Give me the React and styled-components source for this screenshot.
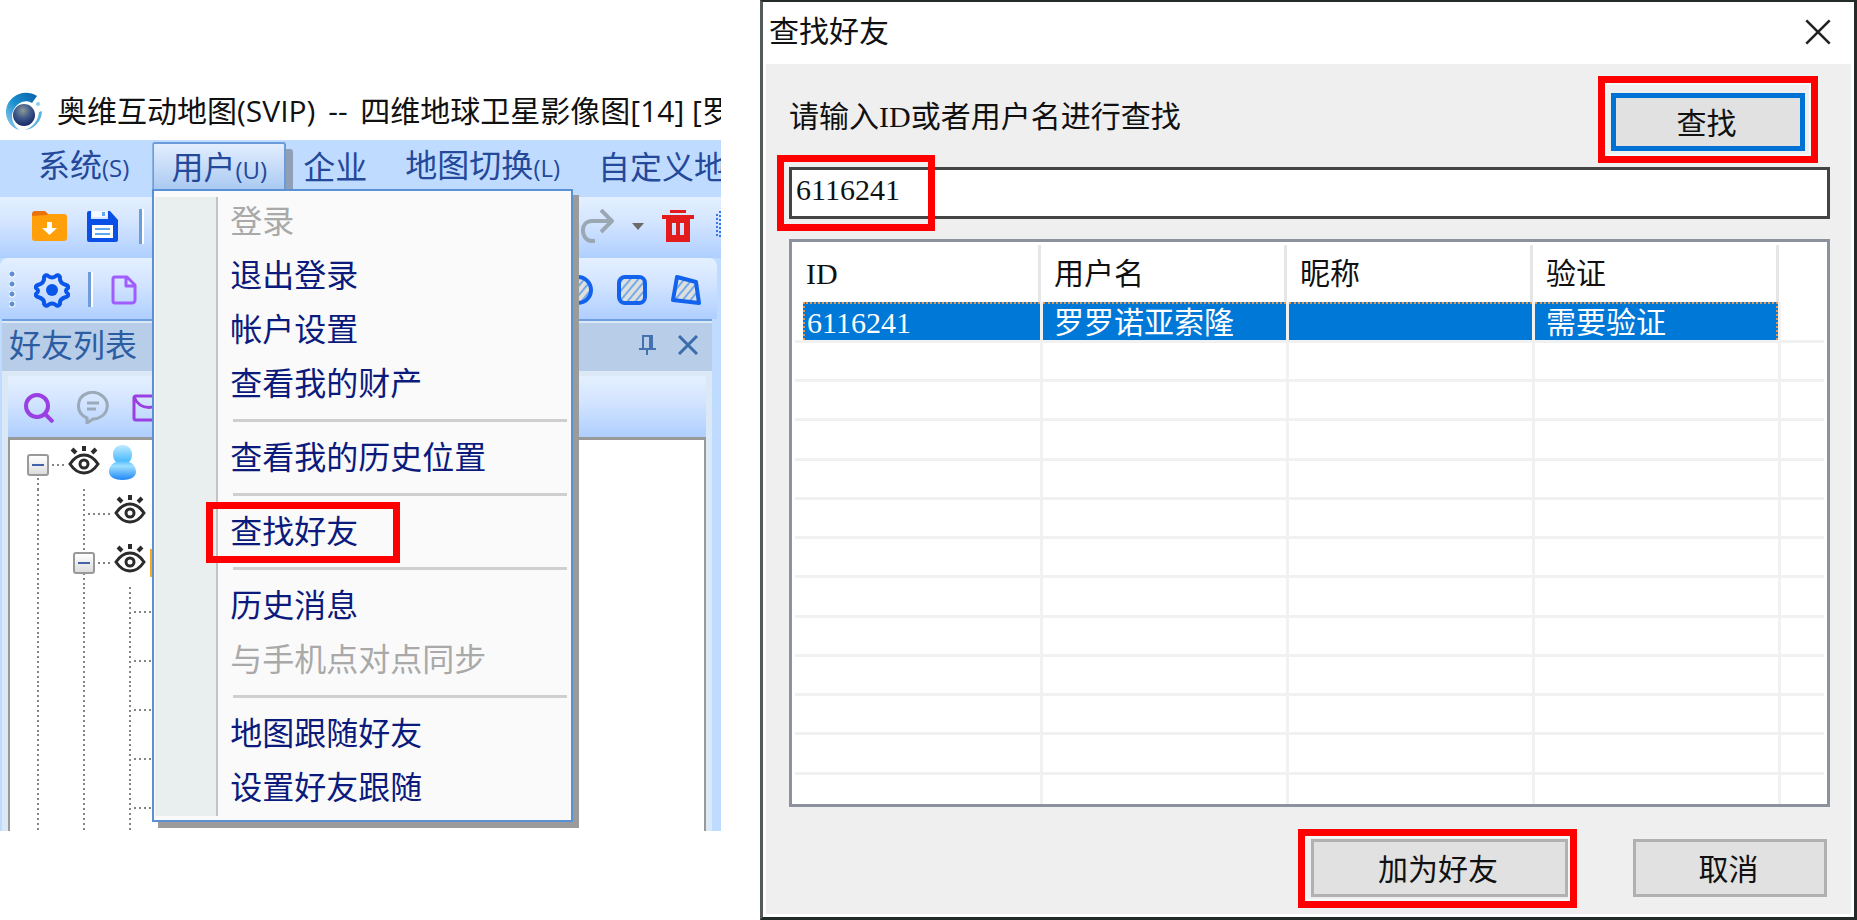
import React from 'react';
import styled, {createGlobalStyle, css} from 'styled-components';

const GlobalStyle = createGlobalStyle`
* { box-sizing: border-box; }
body {
    margin: 0;
    background: #fff;
    font-family: "Open Sans", "Noto Sans CJK SC", sans-serif;
}
button {
    margin: 0;
    padding: 0;
    border: 0;
    background: none;
    font: inherit;
    color: inherit;
    white-space: nowrap;
}
svg { display: block; flex: none; }
`

const Page = styled.main`
display: grid;
grid-template-columns: 721fr 1097fr;
column-gap: 39px;
align-items: start;
`

/* red frame drawn over a control */
const Mark = styled.span`
position: absolute;
border: 7px solid #fe0000;
box-shadow: ${props => props.$halo ? "0 0 0 1px #e9f6f6, inset 0 0 0 2px #f4fafa" : "none"};
pointer-events: none;
inset: ${props => props.$inset};
width: ${props => props.$width || "auto"};
`

const Marked = styled.div`
position: relative;
display: flex;
`

/* ---------- map window ---------- */

const MapWindow = styled.section`
margin-top: 80px;
overflow: hidden;
background: #bfdbff;
`

const TitleBar = styled.header`
display: flex;
align-items: center;
gap: 14px;
height: 60px;
padding: 2px 0 0 5px;
background: #fff;
`

const WindowTitle = styled.h1`
margin: 0;
font-size: 30px;
line-height: 40px;
font-weight: 400;
white-space: nowrap;
color: #111;
span { margin: 0 5px; }
`

const MenuBar = styled.nav`
display: flex;
height: 57px;
padding: 2px 0 6px 19px;
color: #24489a;
font-size: 32px;
line-height: 46px;
white-space: nowrap;
small { font-size: 24px; }
`

const MenuTitle = styled.button`
height: 49px;
padding: 0 19px;
`

const OpenMenu = styled.div`
position: relative;
flex: none;
width: 134px;
margin: 0 -2px 0 4px;
${MenuTitle} {
    width: 100%;
    padding: 0;
    border: 2px solid #6b9bd8;
    border-bottom: 0;
    border-radius: 3px 3px 0 0;
    background: linear-gradient(#e2eefe, #a8c8f1);
    box-shadow: 7px 7px 0 #8f9fb5;
    clip-path: inset(0 -8px 0 0);
}
`

const Menu = styled.div`
position: absolute;
z-index: 2;
top: 47px;
left: 0;
width: 421px;
padding: 3px 4px 6px 76px;
border: 2px solid #5a90d4;
background:
    linear-gradient(#c3c3c3, #c3c3c3) 62px 6px / 2px calc(100% - 10px) no-repeat,
    linear-gradient(#e8efee, #e8efee) 1px 6px / 61px calc(100% - 10px) no-repeat,
    #fafafa;
box-shadow: 6px 6px 0 #9b9b9b;
`

const MenuItem = styled.button`
display: block;
height: 54px;
line-height: 54px;
font-size: 32px;
color: ${props => props.disabled ? "#a9a9a9" : "#0c1a7c"};
`

const Separator = styled.hr`
height: 3px;
margin: 9px 0 8px 3px;
border: 0;
background: #cfcfcf;
`

const Toolbar = styled.div`
display: flex;
justify-content: space-between;
align-items: center;
height: 61px;
margin: ${props => props.$margin || "0"};
padding: ${props => props.$padding};
border-radius: ${props => props.$radius || "0"};
background: linear-gradient(#e4f0ff, #d4e5ff 40%, #afcfff);
`

const Group = styled.div`
display: flex;
align-items: center;
gap: ${props => props.$gap};
`

const Divider = styled.span`
width: 5px;
height: 35px;
border-left: 3px solid #6f9ddb;
border-right: 2px solid #fff;
`

const Grip = styled.span`
width: 7px;
height: 37px;
background: radial-gradient(circle at 3px 3px, #5b8fd0 2px, #fff 3px, transparent 4px) 0 0 / 7px 10px;
`

const FriendPanel = styled.section`
margin: 0 9px 0 2px;
border-top: 2px solid #6f9fe0;
padding: 2px 0 0;
background: #dbe8f6;
`

const PanelCaption = styled.header`
display: flex;
justify-content: space-between;
align-items: center;
height: 48px;
padding: 0 14px 4px 7px;
background: #b8cde8;
color: #2c5da3;
h2 {
    margin: 0;
    font-size: 32px;
    line-height: 40px;
    font-weight: 400;
}
`

const Tree = styled.ul`
height: 394px;
margin: 0 6px;
padding: 0 0 0 5px;
overflow: hidden;
border: solid #999;
border-width: 3px 2px 0;
background: #fff;
list-style: none;
`

const TreeRow = styled.li`
display: flex;
align-items: center;
height: 49px;
`

const vertical = 'repeating-linear-gradient(#858585 0 2px, transparent 2px 5px)'
const horizontal = 'repeating-linear-gradient(90deg, #858585 0 2px, transparent 2px 5px)'
const guides = {
    line: `${vertical} 22px 0 / 2px 100% no-repeat`,
    branch: `${vertical} 22px 0 / 2px 100% no-repeat, ${horizontal} 27px 24px / 22px 2px no-repeat`,
    root: `${vertical} 22px 38px / 2px 100% no-repeat, ${horizontal} 37px 24px / 22px 2px no-repeat`,
    stub: `${horizontal} 1px 24px / 2px 2px no-repeat`,
}

const Guide = styled.span`
display: flex;
flex: none;
justify-content: center;
align-items: center;
width: 46px;
height: 49px;
background: ${props => guides[props.$kind] || "none"};
`

const Toggle = styled.button`
width: 22px;
height: 22px;
border: 2px solid #999;
border-radius: 3px;
background: linear-gradient(#4462a8, #4462a8) center / 12px 2px no-repeat, linear-gradient(#fff, #ddd);
`

/* ---------- find friend dialog ---------- */

const Dialog = styled.section`
border: solid #232b28;
border-width: 2px 3px 3px;
border-left-color: #555c58;
padding: 0 3px 3px;
background: #fff;
color: #111;
font-family: "Liberation Serif", "Noto Sans CJK SC", serif;
font-size: 30px;
line-height: 38px;
`

const DialogTitle = styled.header`
display: flex;
justify-content: space-between;
align-items: center;
height: 62px;
padding: 0 20px 2px 3px;
h2 {
    margin: 0;
    font-size: 30px;
    font-weight: 400;
}
`

const DialogBody = styled.form`
padding: 0 21px 17px 23px;
background: #efefef;
`

const PromptRow = styled.div`
display: flex;
justify-content: space-between;
align-items: flex-start;
height: 103px;
padding: 29px 25px 0 0;
label { margin-top: 5px; }
`

const PushButton = styled.button`
width: ${props => props.$width || "194px"};
height: 58px;
padding: 3px 3px 0 0;
background: #e1e1e1;
${props => props.$primary ? css`border: 5px solid #0072d6;` : css`border: 3px solid #b1b1b1;`}
`

const SearchInput = styled.input`
width: 100%;
height: 52px;
padding: 0 4px 6px;
border: 3px solid #444;
border-radius: 0;
background: #fff;
color: #111;
font: inherit;
outline: 0;
`

const ListView = styled.div`
height: 568px;
margin-top: 20px;
padding: 3px;
overflow: hidden;
border: 3px solid #8c929d;
background: #fff;
`

const ResultTable = styled.table`
width: 100%;
table-layout: fixed;
border-collapse: separate;
border-spacing: 0;
text-align: left;
th, td {
    padding: 0;
    font-weight: 400;
    white-space: nowrap;
}
td {
    border-right: 3px solid #f1f1f1;
    border-bottom: 3px solid #f1f1f1;
}
td:last-child { border-right: 0; }
tbody tr { height: 39px; }
tbody tr:nth-child(4n) { height: 40px; }
tbody tr:last-child td { border-bottom: 0; }
`

const HeadCell = styled.div`
height: 57px;
margin-right: 2px;
padding-left: 11px;
line-height: 58px;
border-right: ${props => props.$last ? "0" : "3px solid #e6e6e6"};
`

const SelectedCell = styled.div`
height: 38px;
padding-left: ${props => props.$first ? "2px" : "11px"};
margin-left: ${props => props.$first ? "8px" : "0"};
line-height: 38px;
border: 0 dotted #e39a55;
border-top-width: 2px;
border-left-width: ${props => props.$first ? "2px" : "0"};
border-right-width: ${props => props.$end ? "2px" : "0"};
background: #0078d7;
color: #fff;
`

const Footer = styled.footer`
display: flex;
justify-content: flex-end;
gap: 65px;
margin-top: 32px;
padding-right: 3px;
`

/* ---------- icons ---------- */

const LogoIcon = () => (
    <svg width="38" height="40" viewBox="0 0 38 40">
        <defs>
            <linearGradient id="swirl" x1="1" y1="0" x2="0" y2="1">
                <stop offset="0" stopColor="#0a5fa8" />
                <stop offset=".5" stopColor="#1a8fd0" />
                <stop offset="1" stopColor="#9fd3ee" />
            </linearGradient>
            <radialGradient id="globe" cx=".45" cy=".3" r=".7">
                <stop offset="0" stopColor="#8b9a94" />
                <stop offset=".5" stopColor="#40598a" />
                <stop offset="1" stopColor="#152a66" />
            </radialGradient>
        </defs>
        <path d="M32 5C20-3 3 4 1 19c-1 9 5 18 13 20C7 33 5 25 9 18 13 11 21 8 27 12z" fill="url(#swirl)" />
        <path d="M37 20c0 9-7 18-17 19 8-3 13-9 14-18z" fill="#5fb4de" />
        <circle cx="19" cy="24" r="11" fill="url(#globe)" />
        <circle cx="33" cy="13" r="2" fill="#8ccdf0" />
    </svg>
)

const FolderIcon = () => (
    <svg width="35" height="32" viewBox="0 0 35 32">
        <path d="M0 4a3 3 0 0 1 3-3h10l4 4v4H0z" fill="#e8730c" />
        <path d="M0 6l15-1 2-1h15a3 3 0 0 1 3 3v21a3 3 0 0 1-3 3H3a3 3 0 0 1-3-3z" fill="#ff9f0a" />
        <path d="M15 12h5v6h5l-7.500 7-7.500-7h5z" fill="#fff" />
    </svg>
)

const SaveIcon = () => (
    <svg width="32" height="33" viewBox="0 0 32 33">
        <path d="M0 3a2 2 0 0 1 2-2h2v8h17V1h2l8 9v20a2 2 0 0 1-2 2H2a2 2 0 0 1-2-2z" fill="#0a50e6" />
        <path d="M5 1h15v6H5z" fill="#f4f8ff" />
        <path d="M15 2h3v4h-3z" fill="#63a6f5" />
        <path d="M5 15h21v13H5z" fill="#fff" />
        <path d="M8 19h15M8 24h15" stroke="#59a9f5" strokeWidth="2" />
    </svg>
)

const GearIcon = () => (
    <svg width="36" height="36" viewBox="0 0 36 36">
        <path d="M10 5q2-3 4-1 4 3 8 0 2-2 4 1-1 6 6 8 3 1 2 3-4 3 0 6 1 2-2 3-7 2-6 7-2 3-4 1-4-3-8 0-2 2-4-1 1-5-6-7-3-1-2-3 4-3 0-6-1-2 2-3 7-2 6-8z" fill="none" stroke="#0a55ea" strokeWidth="4" strokeLinejoin="round" />
        <circle cx="18" cy="18" r="6" fill="#0a55ea" />
    </svg>
)

const FileIcon = () => (
    <svg width="26" height="30" viewBox="0 0 26 30">
        <path d="M4 2h12l8 8v15a3 3 0 0 1-3 3H4a2 2 0 0 1-2-2V4a2 2 0 0 1 2-2zM15 2v9h9" fill="none" stroke="#a05cff" strokeWidth="3" strokeLinejoin="round" />
    </svg>
)

const RedoIcon = () => (
    <svg width="34" height="34" viewBox="0 0 34 34" fill="none" stroke="#9ba7b3" strokeWidth="4">
        <path d="M15 32h-4c-11-2-11-20 1-20h19M21 1l11 11-11 11" />
    </svg>
)

const CaretIcon = () => (
    <svg width="12" height="7" viewBox="0 0 12 7"><path d="M0 0h12L6 7z" fill="#6c6a67" /></svg>
)

const TrashIcon = () => (
    <svg width="32" height="32" viewBox="0 0 32 32">
        <path d="M8 0h16v3H8zM0 5h32v4h-4v23H4V9H0zM10 13v12h4V13zm8 0v12h4V13z" fill="#e31b1b" fillRule="evenodd" />
    </svg>
)

const StripIcon = () => (
    <svg width="5" height="30" viewBox="0 0 5 30"><path d="M4 0v28M1 3v24" stroke="#3478e5" strokeWidth="2" strokeDasharray="2 2" /></svg>
)

const Shape = ({children}) => (
    <svg width="30" height="30" viewBox="0 0 30 30" stroke="#1262ee" strokeWidth="4" strokeLinejoin="round">
        <defs>
            <pattern id="hatch" width="6" height="6" patternUnits="userSpaceOnUse" patternTransform="rotate(40)">
                <rect width="6" height="6" fill="#dfe0dd" stroke="none" />
                <path d="M1 0v6" stroke="#74abeb" strokeWidth="2" />
            </pattern>
        </defs>
        {children}
    </svg>
)

const PinIcon = () => (
    <svg width="17" height="20" viewBox="0 0 17 20" fill="none" stroke="#4472ae" strokeWidth="2">
        <path d="M4 13V1h9v12M0 14h17M8 14v6M11 2v11" />
    </svg>
)

const CrossIcon = ({size, color, stroke}) => (
    <svg width={size} height={size} viewBox="0 0 20 20"><path d="M1 1l18 18M19 1L1 19" stroke={color} strokeWidth={stroke} /></svg>
)

const SearchIcon = () => (
    <svg width="30" height="30" viewBox="0 0 30 30" fill="none" stroke="#9a3fe2" strokeWidth="4">
        <circle cx="13" cy="13" r="11" /><path d="M21 21l8 8" />
    </svg>
)

const ChatIcon = () => (
    <svg width="32" height="33" viewBox="0 0 32 33" fill="none" stroke="#9ba9b9" strokeWidth="3">
        <path d="M10 27C-2 22-1 6 11 2c11-3 21 6 19 15-1 7-8 11-14 11l-6 4z" />
        <path d="M10 12h12M10 18h9" />
    </svg>
)

const MailIcon = () => (
    <svg width="34" height="28" viewBox="0 0 34 28" fill="none" stroke="#9a3fe2" strokeWidth="3">
        <rect x="2" y="2" width="30" height="24" rx="2" /><path d="M2 3c6 14 24 14 30 0" />
    </svg>
)

const EyeIcon = () => (
    <svg width="32" height="50" viewBox="0 0 32 50" fill="none" stroke="#2b2b2b" strokeWidth="3">
        <path d="M2 24c8-12 20-12 28 0-8 12-20 12-28 0z" />
        <circle cx="16" cy="24" r="4" />
        <path d="M16 11V6M8 13l-4-4M24 13l4-4" strokeWidth="4" />
    </svg>
)

const PersonIcon = () => (
    <svg width="29" height="39" viewBox="-2 2 29 39">
        <defs>
            <linearGradient id="body" x1="0" y1="0" x2="0" y2="1">
                <stop offset="0" stopColor="#bfeaff" />
                <stop offset=".45" stopColor="#4fbcff" />
                <stop offset=".6" stopColor="#9fe0ff" />
                <stop offset="1" stopColor="#1c86f5" />
            </linearGradient>
        </defs>
        <path d="M13.500 2C20 2 23 7 23 11c0 4-1 6-3 8 5 2 7 6 7 10 0 5-6 8-13.500 8S0 34 0 29c0-4 2-8 7-10-2-2-3-4-3-8 0-4 3-9 9.500-9z" fill="url(#body)" />
    </svg>
)

const TabFolder = styled.span`
width: 20px;
height: 28px;
margin-left: -3px;
background: #fba919;
`

const columns = ['ID', '用户名', '昵称', '验证']
const found = ['6116241', '罗罗诺亚索隆', '', '需要验证']
const emptyRows = Array.from({length: 12}, (_, i) => i)
const deepRows = Array.from({length: 6}, (_, i) => i)

const userMenu = [
    {text: '登录', disabled: true},
    {text: '退出登录'},
    {text: '帐户设置'},
    {text: '查看我的财产'},
    {},
    {text: '查看我的历史位置'},
    {},
    {text: '查找好友', marked: true},
    {},
    {text: '历史消息'},
    {text: '与手机点对点同步', disabled: true},
    {},
    {text: '地图跟随好友'},
    {text: '设置好友跟随'},
]

const UserMenu = () => (
    <Menu>
        {userMenu.map((item, i) => {
            if (!item.text) return <Separator key={i} />
            if (item.marked) return (
                <Marked key={i}>
                    <MenuItem type="button">{item.text}</MenuItem>
                    <Mark $inset="-2px auto -5px -24px" $width="194px" />
                </Marked>
            )
            return <MenuItem key={i} type="button" disabled={item.disabled}>{item.text}</MenuItem>
        })}
    </Menu>
)

const FriendTree = () => (
    <Tree>
        <TreeRow>
            <Guide $kind="root"><Toggle type="button" aria-label="收起" /></Guide>
            <Guide $kind="stub"><EyeIcon /></Guide>
            <PersonIcon />
        </TreeRow>
        <TreeRow>
            <Guide $kind="line" />
            <Guide $kind="branch" />
            <Guide $kind="stub"><EyeIcon /></Guide>
        </TreeRow>
        <TreeRow>
            <Guide $kind="line" />
            <Guide $kind="branch"><Toggle type="button" aria-label="收起" /></Guide>
            <Guide $kind="stub"><EyeIcon /></Guide>
            <TabFolder />
        </TreeRow>
        {deepRows.map(row => (
            <TreeRow key={row}>
                <Guide $kind="line" />
                <Guide $kind="line" />
                <Guide $kind="branch" />
            </TreeRow>
        ))}
    </Tree>
)

const MapApp = () => (
    <MapWindow>
        <TitleBar>
            <LogoIcon />
            <WindowTitle>奥维互动地图(SVIP) <span>--</span> 四维地球卫星影像图[14] [罗</WindowTitle>
        </TitleBar>
        <MenuBar>
            <MenuTitle type="button">系统<small>(S)</small></MenuTitle>
            <OpenMenu>
                <MenuTitle type="button">用户<small>(U)</small></MenuTitle>
                <UserMenu />
            </OpenMenu>
            <MenuTitle type="button">企业</MenuTitle>
            <MenuTitle type="button">地图切换<small>(L)</small></MenuTitle>
            <MenuTitle type="button">自定义地</MenuTitle>
        </MenuBar>
        <Toolbar $padding="0 0 3px 32px">
            <Group $gap="20px">
                <button type="button" aria-label="打开"><FolderIcon /></button>
                <button type="button" aria-label="保存"><SaveIcon /></button>
                <Divider />
            </Group>
            <Group $gap="22px">
                <Group $gap="18px">
                    <button type="button" aria-label="重做"><RedoIcon /></button>
                    <button type="button" aria-label="更多"><CaretIcon /></button>
                    <button type="button" aria-label="删除"><TrashIcon /></button>
                </Group>
                <StripIcon />
            </Group>
        </Toolbar>
        <Toolbar $margin="0 4px 0 0" $padding="2px 16px 0 9px" $radius="8px 8px 0 0">
            <Group $gap="18px">
                <Grip />
                <button type="button" aria-label="设置"><GearIcon /></button>
                <Divider />
                <button type="button" aria-label="新建"><FileIcon /></button>
            </Group>
            <Group $gap="24px">
                <button type="button" aria-label="圆形"><Shape><circle cx="15" cy="15" r="13" fill="url(#hatch)" /></Shape></button>
                <button type="button" aria-label="矩形"><Shape><rect x="2" y="2" width="26" height="26" rx="6" fill="url(#hatch)" /></Shape></button>
                <button type="button" aria-label="多边形"><Shape><path d="M6 2l19 5 3 21-26-3z" fill="url(#hatch)" /></Shape></button>
            </Group>
        </Toolbar>
        <FriendPanel>
            <PanelCaption>
                <h2>好友列表</h2>
                <Group $gap="22px">
                    <button type="button" aria-label="固定"><PinIcon /></button>
                    <button type="button" aria-label="关闭面板"><CrossIcon size={20} color="#3b6cab" stroke={3} /></button>
                </Group>
            </PanelCaption>
            <Toolbar $margin="5px 6px 0" $padding="2px 0 0 16px">
                <Group $gap="23px">
                    <button type="button" aria-label="搜索"><SearchIcon /></button>
                    <button type="button" aria-label="聊天"><ChatIcon /></button>
                    <button type="button" aria-label="邮件"><MailIcon /></button>
                </Group>
            </Toolbar>
            <FriendTree />
        </FriendPanel>
    </MapWindow>
)

const FindFriend = () => (
    <Dialog>
        <DialogTitle>
            <h2>查找好友</h2>
            <button type="button" aria-label="关闭"><CrossIcon size={26} color="#222" stroke={2} /></button>
        </DialogTitle>
        <DialogBody onSubmit={e => e.preventDefault()}>
            <PromptRow>
                <label htmlFor="friend">请输入ID或者用户名进行查找</label>
                <Marked>
                    <PushButton $primary type="submit">查找</PushButton>
                    <Mark $halo $inset="-17px -13px -12px" />
                </Marked>
            </PromptRow>
            <Marked>
                <SearchInput id="friend" defaultValue="6116241" />
                <Mark $inset="-12px auto -12px -12px" $width="158px" />
            </Marked>
            <ListView>
                <ResultTable>
                    <colgroup>
                        <col width="248" />
                        <col width="246" />
                        <col width="246" />
                        <col width="246" />
                        <col />
                    </colgroup>
                    <thead>
                        <tr>
                            {columns.map(name => <th key={name}><HeadCell>{name}</HeadCell></th>)}
                            <th><HeadCell $last /></th>
                        </tr>
                    </thead>
                    <tbody>
                        <tr>
                            {found.map((value, i) => (
                                <td key={i}><SelectedCell $first={i === 0} $end={i === 3}>{value}</SelectedCell></td>
                            ))}
                            <td />
                        </tr>
                        {emptyRows.map(row => (
                            <tr key={row}><td /><td /><td /><td /><td /></tr>
                        ))}
                    </tbody>
                </ResultTable>
            </ListView>
            <Footer>
                <Marked>
                    <PushButton $width="257px" type="button">加为好友</PushButton>
                    <Mark $halo $inset="-10px -9px -11px -13px" />
                </Marked>
                <PushButton type="button">取消</PushButton>
            </Footer>
        </DialogBody>
    </Dialog>
)

const App = () => (
    <>
        <GlobalStyle />
        <Page>
            <MapApp />
            <FindFriend />
        </Page>
    </>
)

export default App
